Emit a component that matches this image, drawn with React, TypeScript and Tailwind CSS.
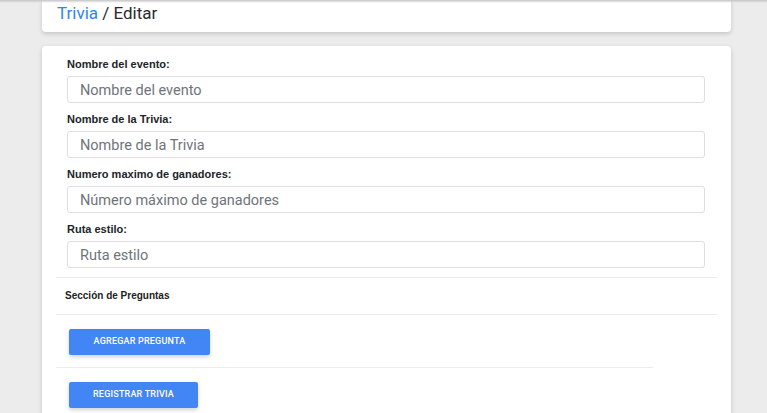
import React from 'react';

const fields = [
  { label: 'Nombre del evento:', placeholder: 'Nombre del evento' },
  { label: 'Nombre de la Trivia:', placeholder: 'Nombre de la Trivia' },
  { label: 'Numero maximo de ganadores:', placeholder: 'Número máximo de ganadores' },
  { label: 'Ruta estilo:', placeholder: 'Ruta estilo' },
];

function Field({ label, placeholder }: { label: string; placeholder: string }) {
  return (
    <div className="mb-[10px] last:mb-[9px]">
      <label className="mb-[5px] block font-['Liberation_Sans',Arial,sans-serif] text-[11px] font-bold leading-[13px] text-[#212529]">
        {label}
      </label>
      <input
        type="text"
        placeholder={placeholder}
        className="block h-[27px] w-full rounded-[3px] border border-[#dcdfe3] bg-white pl-3 pt-[2px] font-['Roboto',sans-serif] text-[14.5px] text-[#495057] outline-none placeholder:text-[#6f747a]"
      />
    </div>
  );
}

function BlueButton({ children, width }: { children: React.ReactNode; width: string }) {
  return (
    <button
      type="button"
      className={`flex h-[26px] ${width} items-center justify-center rounded-[2px] bg-[#4285f4] font-['Roboto',sans-serif] text-[9px] font-medium uppercase tracking-[0.2px] text-white shadow-[0_2px_4px_rgba(0,0,0,0.18)]`}
    >
      {children}
    </button>
  );
}

export default function App() {
  return (
    <div className="relative min-h-[413px] overflow-hidden bg-[#ececec]">
      {/* shadow from the fixed navbar above */}
      <div className="absolute inset-x-0 top-0 z-10 h-[3px] bg-gradient-to-b from-[#c4c4c4] to-transparent" />

      <div className="ml-[42px] w-[689px]">
        <div className="flex h-[32px] rounded-b-[4px] bg-white pl-[15px] shadow-[0_2px_4px_rgba(0,0,0,0.16)]">
          <h1 className="font-['Roboto',sans-serif] text-[17px] leading-[26px] text-[#2b2b2b]">
            <span className="text-[#2d86f0]">Trivia</span> / Editar
          </h1>
        </div>

        <div className="mt-[14px] rounded-[4px] bg-white pb-[8px] shadow-[0_2px_5px_rgba(0,0,0,0.16)]">
          <div className="pl-[25px] pr-[26px] pt-[12px]">
            {fields.map((f) => (
              <Field key={f.label} label={f.label} placeholder={f.placeholder} />
            ))}
          </div>

          <div className="mx-[14px] border-t border-[#ececec]" />
          <div className="py-[12px] pl-[23px] font-['Liberation_Sans',Arial,sans-serif] text-[10px] font-bold leading-[12px] text-[#222]">
            Sección de Preguntas
          </div>
          <div className="mx-[14px] border-t border-[#ececec]" />

          <div className="pb-[12px] pl-[27px] pt-[14px]">
            <BlueButton width="w-[141px]">Agregar pregunta</BlueButton>
          </div>
          <div className="ml-[14px] w-[597px] border-t border-[#ececec]" />
          <div className="pl-[27px] pt-[14px]">
            <BlueButton width="w-[129px]">Registrar trivia</BlueButton>
          </div>
        </div>
      </div>
    </div>
  );
}
